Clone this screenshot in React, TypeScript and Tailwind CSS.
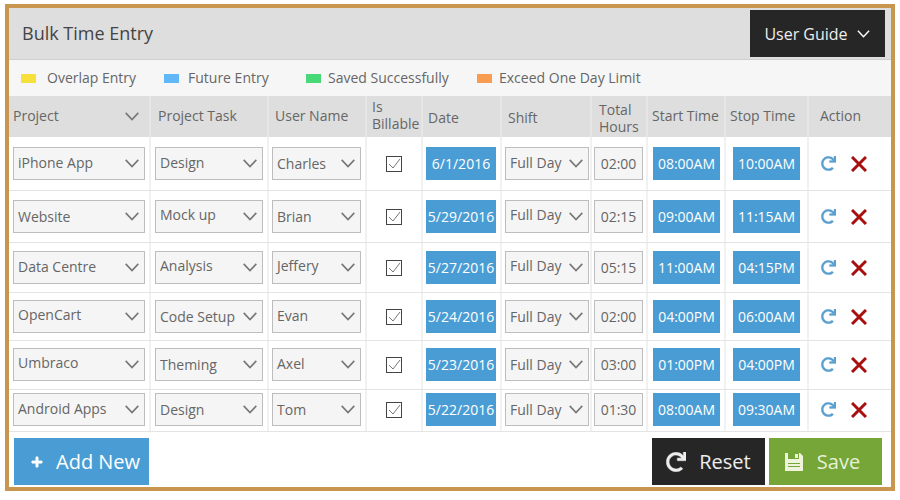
import { FaPlus, FaRedo } from 'react-icons/fa';

interface Entry {
  project: string;
  task: string;
  user: string;
  date: string;
  hours: string;
  start: string;
  stop: string;
  height: string;
  pad: string;
  // how far each label sits above the middle of its box, in px
  up: [number, number, number, number];
}

const entries: Entry[] = [
  { project: 'iPhone App', task: 'Design', user: 'Charles', date: '6/1/2016', hours: '02:00', start: '08:00AM', stop: '10:00AM', height: 'h-[54px]', pad: 'pt-[10px]', up: [1, 1, 0, 1] },
  { project: 'Website', task: 'Mock up', user: 'Brian', date: '5/29/2016', hours: '02:15', start: '09:00AM', stop: '11:15AM', height: 'h-[52px]', pad: 'pt-[9px]', up: [0, 2, 0, 2] },
  { project: 'Data Centre', task: 'Analysis', user: 'Jeffery', date: '5/27/2016', hours: '05:15', start: '11:00AM', stop: '04:15PM', height: 'h-[50px]', pad: 'pt-[8px]', up: [1, 2, 2, 2] },
  { project: 'OpenCart', task: 'Code Setup', user: 'Evan', date: '5/24/2016', hours: '02:00', start: '04:00PM', stop: '06:00AM', height: 'h-[48px]', pad: 'pt-[7px]', up: [2, 0, 1, 0] },
  { project: 'Umbraco', task: 'Theming', user: 'Axel', date: '5/23/2016', hours: '03:00', start: '01:00PM', stop: '04:00PM', height: 'h-[49px]', pad: 'pt-[7px]', up: [2, 0, 1, 0] },
  { project: 'Android Apps', task: 'Design', user: 'Tom', date: '5/22/2016', hours: '01:30', start: '08:00AM', stop: '09:30AM', height: 'h-[42px]', pad: 'pt-[3px]', up: [1, 0, 0, 0] },
];

const gridCols = 'grid grid-cols-[142px_118px_98px_56px_79px_90px_56px_78px_83px_82px]';
const nudge = ['', 'pb-[2px]', 'pb-1'];

const Chevron = ({ className }: { className: string }) => (
  <svg viewBox="0 0 16 10" className={className} fill="none" stroke="currentColor" strokeWidth="1.8">
    <polyline points="1,1 8,8.5 15,1" />
  </svg>
);

const SelectBox = ({ label, up, className }: { label: string; up: number; className: string }) => (
  <div className={`flex h-[33px] items-center justify-between border border-[#bdbdbd] bg-[#f5f5f5] pl-1 pr-[4px] text-[#666] ${className}`}>
    <span className={`whitespace-nowrap ${nudge[up]}`}>{label}</span>
    <Chevron className="h-[9px] w-[16px] shrink-0 text-[#777]" />
  </div>
);

const BlueBox = ({ label, className }: { label: string; className: string }) => (
  <div className={`flex h-[33px] items-center justify-center whitespace-nowrap bg-[#4a9dd4] text-white ${className}`}>{label}</div>
);

const Legend = ({ color, label, className }: { color: string; label: string; className: string }) => (
  <div className={`flex items-center ${className}`}>
    <span className={`h-[9px] w-[15px] ${color}`} />
    <span className="whitespace-nowrap">{label}</span>
  </div>
);

const HeadCell = ({ children, className = '' }: { children: React.ReactNode; className?: string }) => (
  <div className={`flex items-center border-r-2 border-[#e6e6e6] leading-[17px] ${className}`}>{children}</div>
);

const Cell = ({ children, className }: { children: React.ReactNode; className: string }) => (
  <div className={`border-r-2 border-[#f1f1f1] ${className}`}>{children}</div>
);

const SaveIcon = () => (
  <svg viewBox="0 0 18 18" className="h-[18px] w-[18px]">
    <path d="M0 0H15L18 3V18H0Z" fill="#eef3dc" />
    <rect x="3" y="0" width="11" height="6" fill="#75a637" />
    <rect x="10" y="1" width="3" height="4" fill="#eef3dc" />
    <rect x="3" y="10" width="12" height="1" fill="#75a637" />
    <rect x="3" y="13" width="12" height="1" fill="#75a637" />
  </svg>
);

export default function App() {
  return (
    <div className="h-[500px] w-[900px] bg-white pl-[5px] pt-1 font-['Open_Sans',sans-serif] text-sm">
      <div className="flex h-[487px] w-[890px] flex-col border-4 border-[#c9964f] bg-white">
        {/* Title bar */}
        <div className="flex h-[52px] shrink-0 items-start justify-between border-b border-[#cfcfcf] bg-[#dedede]">
          <h1 className="pl-[13px] pt-[13px] text-[18px] leading-6 text-[#444]">Bulk Time Entry</h1>
          <button className="mr-[6px] mt-[2px] flex h-[47px] w-[135px] items-center justify-center gap-2 bg-[#262626] text-base text-[#eee]">
            User Guide
            <Chevron className="h-[8px] w-[15px] text-white" />
          </button>
        </div>

        {/* Legend */}
        <div className="flex h-[36px] shrink-0 items-center bg-[#f6f6f6] text-[#666]">
          <Legend color="bg-[#f7e03c]" label="Overlap Entry" className="ml-[12px] w-[143px] gap-[11px]" />
          <Legend color="bg-[#60b8f8]" label="Future Entry" className="w-[142px] gap-[9px]" />
          <Legend color="bg-[#48d878]" label="Saved Successfully" className="w-[171px] gap-[7px]" />
          <Legend color="bg-[#f79c50]" label="Exceed One Day Limit" className="gap-[7px]" />
        </div>

        {/* Table head */}
        <div className={`${gridCols} h-[41px] shrink-0 bg-[#dedede] text-[#666]`}>
          <HeadCell className="justify-between pl-1 pr-[9px]">
            <span className="pb-[2px]">Project</span>
            <Chevron className="h-[9px] w-[16px] text-[#777]" />
          </HeadCell>
          <HeadCell className="pb-[2px] pl-[7px]">Project Task</HeadCell>
          <HeadCell className="pb-[2px] pl-[6px]">User Name</HeadCell>
          <HeadCell className="pb-1 pl-[5px]">Is<br />Billable</HeadCell>
          <HeadCell className="pl-[5px] pt-[2px]">Date</HeadCell>
          <HeadCell className="pl-[6px] pt-[2px]">Shift</HeadCell>
          <HeadCell className="pl-[7px] pt-[2px]">Total<br />Hours</HeadCell>
          <HeadCell className="pb-[2px] pl-1">Start Time</HeadCell>
          <HeadCell className="pb-[2px] pl-1">Stop Time</HeadCell>
          <div className="flex items-center pb-[2px] pl-[11px]">Action</div>
        </div>

        {/* Rows */}
        {entries.map((entry) => (
          <div key={entry.project} className={`${gridCols} shrink-0 border-b border-[#e4e4e4] ${entry.height}`}>
            <Cell className={`${entry.pad} pl-1`}>
              <SelectBox label={entry.project} up={entry.up[0]} className="w-[132px]" />
            </Cell>
            <Cell className={`${entry.pad} pl-1`}>
              <SelectBox label={entry.task} up={entry.up[1]} className="w-[108px]" />
            </Cell>
            <Cell className={`${entry.pad} pl-[3px]`}>
              <SelectBox label={entry.user} up={entry.up[2]} className="w-[89px]" />
            </Cell>
            <Cell className={entry.pad}>
              <div className="flex h-[33px] items-center justify-center">
                <svg viewBox="0 0 16 16" className="h-4 w-4" fill="none">
                  <rect x="0.5" y="0.5" width="15" height="15" stroke="#444" />
                  <polyline points="3,8 7,12 14,3" stroke="#777" />
                </svg>
              </div>
            </Cell>
            <Cell className={`${entry.pad} pl-[3px]`}>
              <BlueBox label={entry.date} className="w-[70px]" />
            </Cell>
            <Cell className={`${entry.pad} pl-[3px]`}>
              <SelectBox label="Full Day" up={entry.up[3]} className="w-[84px]" />
            </Cell>
            <Cell className={`${entry.pad} pl-[2px]`}>
              <div className="flex h-[33px] w-[49px] items-center justify-center border border-[#bdbdbd] bg-[#f5f5f5] text-[#666]">{entry.hours}</div>
            </Cell>
            <Cell className={`${entry.pad} pl-[5px]`}>
              <BlueBox label={entry.start} className="w-[67px]" />
            </Cell>
            <Cell className={`${entry.pad} pl-[7px]`}>
              <BlueBox label={entry.stop} className="w-[67px]" />
            </Cell>
            <div className={entry.pad}>
              <div className="flex h-[33px] items-center gap-[15px] pl-[12px]">
                <FaRedo className="h-[15px] w-[15px] text-[#5a9fcf]" stroke="currentColor" strokeWidth={10} />
                <svg viewBox="0 0 16 16" className="h-4 w-4 text-[#a80f0f]" fill="none" stroke="currentColor" strokeWidth="3">
                  <path d="M1 1L15 15M15 1L1 15" />
                </svg>
              </div>
            </div>
          </div>
        ))}

        {/* Footer buttons */}
        <div className="flex flex-1 items-start justify-between pl-[5px] pr-[9px] pt-[6px] text-xl">
          <button className="flex h-[47px] w-[135px] items-center gap-[13px] bg-[#4a9dd4] pl-[17px] text-white">
            <FaPlus className="h-[12px] w-[12px]" stroke="currentColor" strokeWidth={30} />
            Add New
          </button>
          <div className="flex gap-1">
            <button className="flex h-[47px] w-[113px] items-center justify-center gap-[13px] bg-[#262626] text-[#eee]">
              <FaRedo className="h-[20px] w-[20px]" stroke="currentColor" strokeWidth={10} />
              Reset
            </button>
            <button className="flex h-[47px] w-[113px] items-center justify-center gap-[14px] bg-[#75a637] pr-[6px] text-[#e8f0d8]">
              <SaveIcon />
              Save
            </button>
          </div>
        </div>
      </div>
    </div>
  );
}
